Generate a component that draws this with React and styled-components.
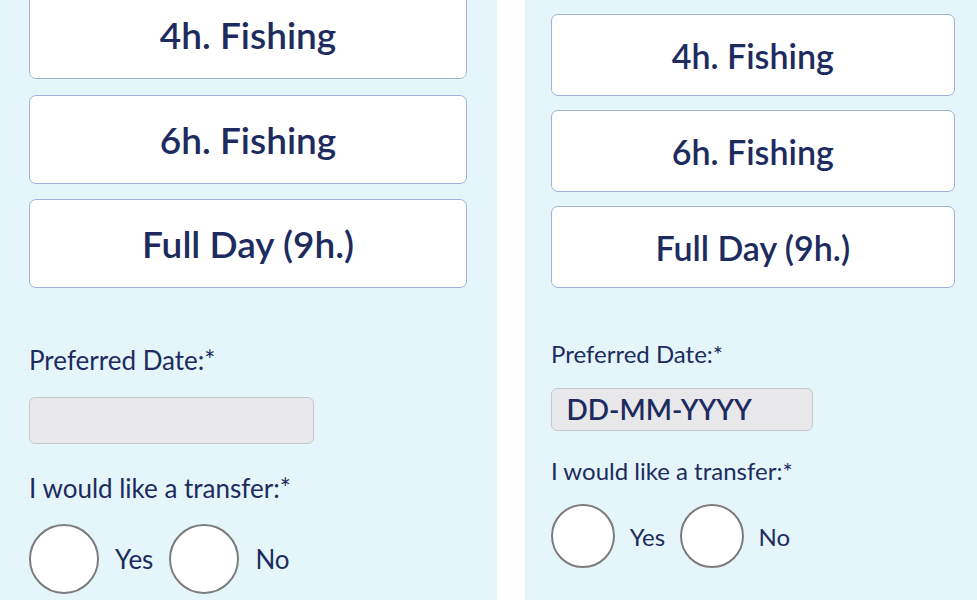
import React from 'react';
import styled, { createGlobalStyle, ThemeProvider } from 'styled-components';

const GlobalStyle = createGlobalStyle`
  html, body {
    margin: 0;
    padding: 0;
    background: #fff;
    overflow: hidden;
  }
  body {
    font-family: Lato, "Open Sans", sans-serif;
    color: #1d2b5e;
  }
  *, *::before, *::after {
    box-sizing: border-box;
  }
`;

// each screen is the same form at a slightly different scale
const wide = {
  padTop: -10, padLeft: 29, padRight: 30,
  optH: 89, optGap: 15.5, optFont: 37,
  afterOpts: 57, labelFont: 26,
  inputW: 285, inputH: 47, inputFont: 29, inputPad: 15,
  labelToInput: 21, inputToLabel: 28.5, labelToRadio: 20,
  radio: 70, radioGap: 16,
};

const narrow = {
  padTop: 14, padLeft: 26.5, padRight: 22.5,
  optH: 82, optGap: 14, optFont: 34,
  afterOpts: 52, labelFont: 24,
  inputW: 262, inputH: 43, inputFont: 28, inputPad: 14.5,
  labelToInput: 19, inputToLabel: 26, labelToRadio: 18.5,
  radio: 64, radioGap: 14.7,
};

const Page = styled.div`
  display: flex;
  gap: 27.5px;
  height: 600px;
  background: #fff;
`;

const Panel = styled.section`
  background: #e4f6f9;
  flex: ${p => (p.$width ? `0 0 ${p.$width}px` : '1')};
  min-width: 0;
  display: flex;
  flex-direction: column;
  padding: 0 ${p => p.theme.padRight}px 0 ${p => p.theme.padLeft}px;
  overflow: hidden;
`;

const Options = styled.div`
  display: flex;
  flex-direction: column;
  gap: ${p => p.theme.optGap}px;
  margin-top: ${p => p.theme.padTop}px;
`;

const Option = styled.button`
  height: ${p => p.theme.optH}px;
  background: #fff;
  border: 1.5px solid #9fb3d9;
  border-radius: 7px;
  font-family: Lato, sans-serif;
  font-weight: 600;
  font-size: ${p => p.theme.optFont}px;
  color: #1d2b5e;
  cursor: pointer;
`;

const Label = styled.div`
  font-size: ${p => p.theme.labelFont}px;
  line-height: 1.2;
  margin-top: ${p => p.$top}px;
`;

const DateInput = styled.input`
  width: ${p => p.theme.inputW}px;
  height: ${p => p.theme.inputH}px;
  margin-top: ${p => p.theme.labelToInput}px;
  padding: 0 ${p => p.theme.inputPad}px;
  background: #e8e8ea;
  border: 1.5px solid #c8c8cc;
  border-radius: 6px;
  font-family: Lato, sans-serif;
  font-weight: 600;
  font-size: ${p => p.theme.inputFont}px;
  color: #1d2b5e;
  outline: none;

  &::placeholder {
    color: #1d2b5e;
    opacity: 1;
  }
`;

const RadioRow = styled.div`
  display: flex;
  align-items: center;
  gap: ${p => p.theme.radioGap}px;
  margin-top: ${p => p.theme.labelToRadio}px;
`;

const Circle = styled.span`
  width: ${p => p.theme.radio}px;
  height: ${p => p.theme.radio}px;
  border-radius: 50%;
  border: 2px solid #7c7c7c;
  background: #fff;
  flex: none;
`;

const RadioText = styled.span`
  font-size: ${p => p.theme.labelFont}px;
`;

const Choice = ({ children }) => (
  <>
    <Circle />
    <RadioText>{children}</RadioText>
  </>
);

const BookingForm = ({ theme, width, placeholder }) => (
  <ThemeProvider theme={theme}>
    <Panel $width={width}>
      <Options>
        <Option>4h. Fishing</Option>
        <Option>6h. Fishing</Option>
        <Option>Full Day (9h.)</Option>
      </Options>
      <Label $top={theme.afterOpts}>Preferred Date:*</Label>
      <DateInput placeholder={placeholder} readOnly />
      <Label $top={theme.inputToLabel}>I would like a transfer:*</Label>
      <RadioRow>
        <Choice>Yes</Choice>
        <Choice>No</Choice>
      </RadioRow>
    </Panel>
  </ThemeProvider>
);

export default function App() {
  return (
    <>
      <GlobalStyle />
      <Page>
        <BookingForm theme={wide} width={497} placeholder="" />
        <BookingForm theme={narrow} placeholder="DD-MM-YYYY" />
      </Page>
    </>
  );
}
